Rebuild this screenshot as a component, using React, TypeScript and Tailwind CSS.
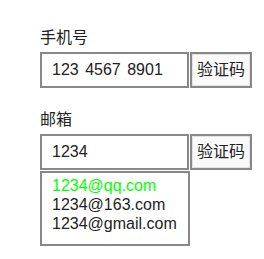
import React from 'react';

const suggestions = ['1234@qq.com', '1234@163.com', '1234@gmail.com'];

const Field: React.FC<{ label: string; value: string; className?: string }> = ({ label, value, className }) => (
  <div className={className}>
    <div className="h-5 leading-5 text-[16px] mb-[4px]">{label}</div>
    <div className="flex h-[36px]">
      <div className="w-[149px] h-full border-2 border-[#888] bg-white pl-[10px] leading-[32px] whitespace-pre [word-spacing:2px]">
        {value}
      </div>
      <div className="ml-[1px] w-[62px] h-full border-2 border-[#888] bg-[#fafafa] shadow-[inset_0_0_0_1px_#e3e3e3] flex items-center justify-center">
        验证码
      </div>
    </div>
  </div>
);

export default function App() {
  return (
    <div
      className="w-[264px] h-[259px] bg-white pl-[40px] pt-[28px] text-[16px] text-[#222]"
      style={{ fontFamily: '"Liberation Sans", "Noto Sans CJK SC", sans-serif' }}
    >
      <Field label="手机号" value="123 4567 8901" />
      <Field label="邮箱" value="1234" className="mt-[22px]" />
      {/* Suggestion dropdown */}
      <div className="mt-[1px] w-[150px] h-[75px] border-2 border-[#888] pl-[10px] pt-[3px] leading-[19px]">
        {suggestions.map((s, i) => (
          <div key={s} className={i === 0 ? 'text-[#00ff00]' : ''}>
            {s}
          </div>
        ))}
      </div>
    </div>
  );
}
